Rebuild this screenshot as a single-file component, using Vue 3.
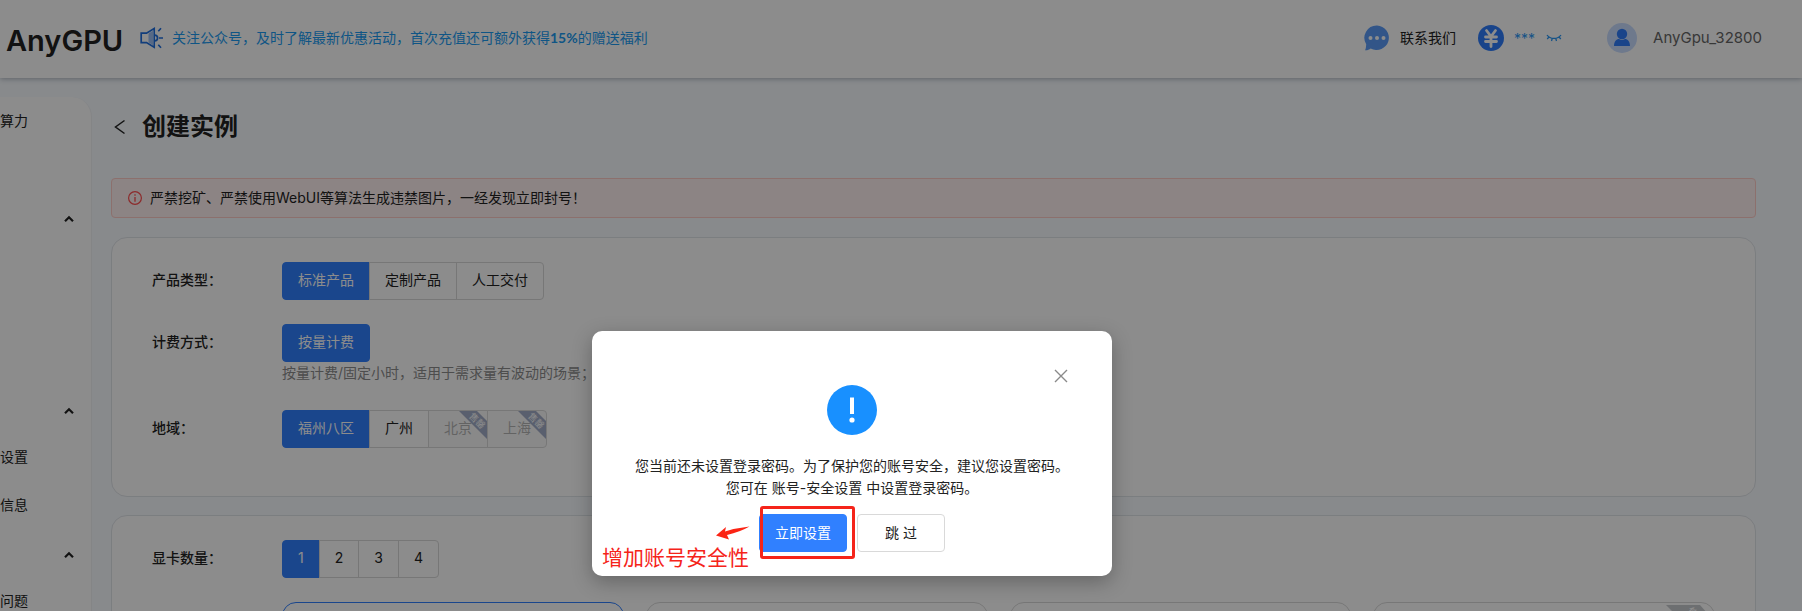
<script setup>
import { ref } from 'vue'

const menu = ['算力', '', '^', '', '', '', '^', '设置', '信息', '^', '问题']
const product = ref('标准产品')
const billing = ref('按量计费')
const region = ref('福州八区')
const count = ref('1')
const products = ['标准产品', '定制产品', '人工交付']
const regions = [
  { name: '福州八区' },
  { name: '广州' },
  { name: '北京', soldOut: true },
  { name: '上海', soldOut: true },
]
const counts = ['1', '2', '3', '4']
</script>

<template>
  <div class="app">
    <header class="header">
      <a class="logo" href="#">AnyGPU</a>
      <a class="notice" href="#">
        <svg class="horn" width="24" height="22" viewBox="0 0 24 22" fill="none" stroke="#1f6fe0" stroke-width="1.7">
          <path d="M1.2 6.2H6.5L14.2 1.5V20.3L6.5 15.6H1.2Z" />
          <path d="M8.5 6.5L13.4 3.4V18.4L8.5 15.4Z" fill="#9dc0f5" stroke="none" />
          <path d="M14.5 8.2C18.6 8.2 18.6 13.8 14.5 13.8M19 11H23M18.3 4.2L21 1.2M18.3 17.8L21 20.8" />
        </svg>
        <span>关注公众号，及时了解最新优惠活动，首次充值还可额外获得<b>15%</b>的赠送福利</span>
      </a>
      <div class="tools">
        <a class="contact" href="#">
          <svg width="26" height="26" viewBox="0 0 26 26">
            <path d="M13 0.5A12.3 12.3 0 1 1 6.7 23.6C5 25 3 25.500 1 25.300C2 23.500 2 21.500 2.200 19.200A12.300 12.300 0 0 1 13 0.500Z" fill="#5b9cf8" />
            <circle cx="6.500" cy="13" r="2" fill="#fff" /><circle cx="13" cy="13" r="2" fill="#fff" /><circle cx="19.500" cy="13" r="2" fill="#fff" />
          </svg>
          <span>联系我们</span>
        </a>
        <div class="balance">
          <svg width="26" height="26" viewBox="0 0 26 26">
            <circle cx="13" cy="13" r="13" fill="#2f7dfb" />
            <path d="M8.500 5.500L13 11.500L17.500 5.500M7.500 12H18.500M7.500 16.500H18.500M13 11.500V21.500" fill="none" stroke="#fff" stroke-width="2.800" stroke-linecap="round" />
          </svg>
          <span class="stars">***</span>
          <button class="eye" type="button" aria-label="显示余额">
            <svg width="16" height="8" viewBox="0 0 16 8" fill="none" stroke="#2a97f5" stroke-width="1.300">
              <path d="M1 1C4 5.500 12 5.500 15 1M3 3L1.200 5M6.300 4.300L5.500 7M9.700 4.300L10.500 7M13 3L14.800 5" />
            </svg>
          </button>
        </div>
        <a class="user" href="#">
          <svg width="30" height="30" viewBox="0 0 30 30">
            <circle cx="15" cy="15" r="15" fill="#c8dcff" />
            <circle cx="15" cy="11" r="5.200" fill="#2f7dfb" />
            <path d="M7 23C7 18.500 9.500 16 12 16C14 17.200 16 17.200 18 16C20.500 16 23 18.500 23 23Z" fill="#2f7dfb" />
          </svg>
          <span>AnyGpu_32800</span>
        </a>
      </div>
    </header>

    <div class="body">
      <nav class="sidebar">
        <div v-for="(item, i) in menu" :key="i" class="menu-row">
          <svg v-if="item === '^'" class="caret" width="10" height="8" viewBox="0 0 10 8" fill="none" stroke="#222" stroke-width="2.200">
            <path d="M1 6.200L5 2.200L9 6.200" />
          </svg>
          <a v-else-if="item" class="menu-link" href="#">{{ item }}</a>
        </div>
      </nav>

      <main class="main">
        <div class="title">
          <button class="back" type="button" aria-label="返回">
            <svg width="12" height="16" viewBox="0 0 12 16" fill="none" stroke="#222" stroke-width="1.500"><path d="M10.500 1.500L1.500 8L10.500 14.500" /></svg>
          </button>
          <h1>创建实例</h1>
        </div>

        <div class="alert" role="alert">
          <svg width="14" height="14" viewBox="0 0 14 14">
            <circle cx="7" cy="7" r="6.400" fill="none" stroke="#ff4d4f" stroke-width="1.200" />
            <path d="M7 3.200V4.700M7 6V10.800" stroke="#ff4d4f" stroke-width="1.300" />
          </svg>
          <span>严禁挖矿、严禁使用WebUI等算法生成违禁图片，一经发现立即封号！</span>
        </div>

        <section class="card">
          <fieldset class="row">
            <legend class="label">产品类型：</legend>
            <div class="group">
              <label v-for="p in products" :key="p" class="option" :class="{ on: product === p }">
                <input v-model="product" type="radio" name="product" :value="p" />{{ p }}
              </label>
            </div>
          </fieldset>
          <fieldset class="row">
            <legend class="label">计费方式：</legend>
            <div>
              <div class="group">
                <label class="option on"><input v-model="billing" type="radio" name="billing" value="按量计费" />按量计费</label>
              </div>
              <p class="hint">按量计费/固定小时，适用于需求量有波动的场景；</p>
            </div>
          </fieldset>
          <fieldset class="row">
            <legend class="label">地域：</legend>
            <div class="group">
              <label v-for="r in regions" :key="r.name" class="option" :class="{ on: region === r.name, off: r.soldOut }">
                <input v-model="region" type="radio" name="region" :value="r.name" :disabled="r.soldOut" />{{ r.name }}
                <svg v-if="r.soldOut" class="ribbon" width="28" height="28" viewBox="0 0 28 28">
                  <path d="M0 0H18L28 10V28Z" fill="#a3aec8" />
                  <text x="0" y="3" transform="translate(18 10) rotate(45)" text-anchor="middle" font-size="9" fill="#fff">售罄</text>
                </svg>
              </label>
            </div>
          </fieldset>
        </section>

        <section class="card">
          <fieldset class="row">
            <legend class="label">显卡数量：</legend>
            <div class="group">
              <label v-for="c in counts" :key="c" class="option" :class="{ on: count === c }">
                <input v-model="count" type="radio" name="count" :value="c" />{{ c }}
              </label>
            </div>
          </fieldset>
          <div class="gpus">
            <div class="gpu chosen"></div>
            <div class="gpu"></div>
            <div class="gpu"></div>
            <div class="gpu">
              <svg class="gpu-ribbon" width="48" height="48" viewBox="0 0 48 48">
                <path d="M0 0H34L41 8V41Z" fill="#c6cace" />
                <text x="0" y="4" transform="translate(30 13) rotate(45)" text-anchor="middle" font-size="12" fill="#fff">售罄</text>
              </svg>
            </div>
          </div>
        </section>
      </main>
    </div>

    <div class="mask">
      <div class="modal" role="dialog" aria-modal="true" aria-describedby="tip">
        <button class="close" type="button" aria-label="关闭">
          <svg width="14" height="14" viewBox="0 0 14 14" fill="none" stroke="#8a8a8a" stroke-width="1.400"><path d="M1 1L13 13M13 1L1 13" /></svg>
        </button>
        <svg class="warn" width="50" height="50" viewBox="0 0 50 50">
          <circle cx="25" cy="25" r="25" fill="#1890ff" />
          <path d="M23 12.500H27V29H23Z" fill="#fff" /><circle cx="25" cy="35" r="2.600" fill="#fff" />
        </svg>
        <p id="tip" class="tip">您当前还未设置登录密码。为了保护您的账号安全，建议您设置密码。<br />您可在 账号-安全设置 中设置登录密码。</p>
        <div class="actions">
          <div class="primary-wrap">
            <button class="btn primary" type="button">立即设置</button>
            <span class="frame"></span>
          </div>
          <button class="btn" type="button">跳 过</button>
        </div>
        <div class="note">
          <svg class="arrow" width="34" height="15" viewBox="0 0 34 15"><path d="M0 9.500L10 1L9 5.500Q20 2 33.500 0.500Q24 6 11 9L13 13.500Z" fill="#fb2414" /></svg>
          <span>增加账号安全性</span>
        </div>
      </div>
    </div>
  </div>
</template>

<style>
body {
  margin: 0;
}
</style>

<style scoped>
.app {
  position: relative;
  display: flex;
  flex-direction: column;
  height: 100vh;
  overflow: hidden;
  background: #f7fbff;
  color: #222;
  font-family: Inter, "Noto Sans CJK SC", sans-serif;
  font-size: 14px;
  line-height: 22px;
}
.app * {
  box-sizing: border-box;
}
a {
  color: inherit;
  text-decoration: none;
}
button {
  padding: 0;
  border: 0;
  background: none;
  font: inherit;
  color: inherit;
  cursor: pointer;
}
svg {
  display: block;
  flex: none;
}
.header {
  display: flex;
  align-items: center;
  flex: none;
  height: 78px;
  padding: 0 40px 2px 6px;
  background: #fff;
  box-shadow: 0 1px 5px rgba(0, 21, 41, 0.3);
  z-index: 1;
}
.logo {
  width: 134px;
  padding-top: 6px;
  font-size: 29px;
  font-weight: 600;
  line-height: 38px;
}
.notice {
  display: flex;
  align-items: center;
  gap: 8px;
  color: #1c9cf2;
}
.notice b {
  font-family: Lato, sans-serif;
  font-weight: 700;
}
.tools {
  display: flex;
  align-items: center;
  margin-left: auto;
}
.contact,
.balance {
  display: flex;
  align-items: center;
  gap: 10px;
}
.contact {
  margin-right: 22px;
}
.stars {
  width: 22px;
  padding-top: 2px;
  color: #2a97f5;
  font-size: 14px;
}
.user {
  display: flex;
  align-items: center;
  gap: 16px;
  margin-left: 45px;
  color: #666;
  font-size: 15px;
}
.body {
  display: flex;
  flex: 1;
  min-height: 0;
}
.sidebar {
  flex: none;
  width: 92px;
  margin-top: 19px;
  overflow: hidden;
  background: #fff;
  border-right: 1px solid #f0f2f5;
  border-radius: 0 20px 0 0;
}
.menu-row {
  display: flex;
  align-items: center;
  height: 48px;
}
.menu-link {
  width: 28px;
  white-space: nowrap;
}
.caret {
  margin: 4px 0 0 64px;
}
.main {
  flex: 1;
  min-width: 0;
  margin: 33px 46px 0 19px;
}
.title {
  display: flex;
  align-items: center;
  gap: 16px;
  height: 32px;
  padding-left: 3px;
}
h1 {
  margin: 0;
  font-size: 24px;
  font-weight: 700;
  line-height: 32px;
}
.alert {
  display: flex;
  align-items: center;
  gap: 8px;
  height: 40px;
  margin: 35px 0 19px;
  padding: 0 16px;
  border: 1px solid #ffccc7;
  border-radius: 4px;
  background: #fff1f0;
}
.card {
  margin-bottom: 18px;
  padding: 24px 40px;
  border: 1px solid #e1e5ea;
  border-radius: 16px;
  background: #fff;
}
.row {
  display: flex;
  min-width: 0;
  margin: 0 0 24px;
  padding: 0;
  border: 0;
}
.label {
  float: left;
  width: 130px;
  padding: 0;
  font-weight: 500;
  line-height: 36px;
}
.group {
  display: flex;
}
.option {
  position: relative;
  height: 38px;
  margin-left: -1px;
  padding: 0 15px;
  border: 1px solid #d9d9d9;
  line-height: 34px;
  white-space: nowrap;
  cursor: pointer;
}
.option:first-child {
  margin-left: 0;
  border-radius: 4px 0 0 4px;
}
.option:last-child {
  border-radius: 0 4px 4px 0;
}
.option:only-child {
  border-radius: 4px;
}
.option input {
  position: absolute;
  opacity: 0;
  width: 0;
  height: 0;
  margin: 0;
}
.option.on {
  border-color: #3080ff;
  background: #3080ff;
  color: #fff;
}
.option.off {
  color: #b5b5b5;
  background: #fafafa;
  cursor: not-allowed;
}
.ribbon {
  position: absolute;
  top: 0;
  right: 0;
}
.hint {
  margin: 0;
  padding-bottom: 2px;
  color: #8c8c8c;
  line-height: 22px;
}
.gpus {
  display: grid;
  grid-template-columns: repeat(4, 1fr);
  gap: 22px;
  margin-left: 130px;
}
.gpu {
  position: relative;
  height: 120px;
  border: 1px solid #d9d9d9;
  border-radius: 14px;
}
.gpu.chosen {
  border-color: #3080ff;
}
.gpu-ribbon {
  position: absolute;
  top: 2px;
  right: 0;
}
.mask {
  position: absolute;
  inset: 0;
  z-index: 2;
  display: flex;
  justify-content: center;
  align-items: flex-start;
  padding: 331px 98px 0 0;
  background: rgba(0, 0, 0, 0.45);
}
.modal {
  position: relative;
  width: 520px;
  padding: 54px 24px 24px;
  border-radius: 10px;
  background: #fff;
  box-shadow: 0 6px 20px rgba(0, 0, 0, 0.28);
  text-align: center;
}
.close {
  position: absolute;
  top: 38px;
  right: 44px;
}
.warn {
  margin: 0 auto 20px;
}
.tip {
  margin: 0 0 15px;
  white-space: nowrap;
}
.actions {
  display: flex;
  justify-content: center;
  gap: 10px;
}
.primary-wrap {
  position: relative;
}
.btn {
  width: 88px;
  height: 38px;
  border: 1px solid #d9d9d9;
  border-radius: 4px;
}
.btn.primary {
  border-color: #3080ff;
  background: #3080ff;
  color: #fff;
}
.frame {
  position: absolute;
  inset: -8px -8px -7px 1px;
  border: 3px solid #f5241a;
  border-radius: 3px;
}
.note {
  position: absolute;
  left: 9px;
  bottom: 4px;
  color: #f5241a;
  font-size: 21px;
  line-height: 28px;
}
.arrow {
  margin: 0 0 3px 115px;
}
</style>
